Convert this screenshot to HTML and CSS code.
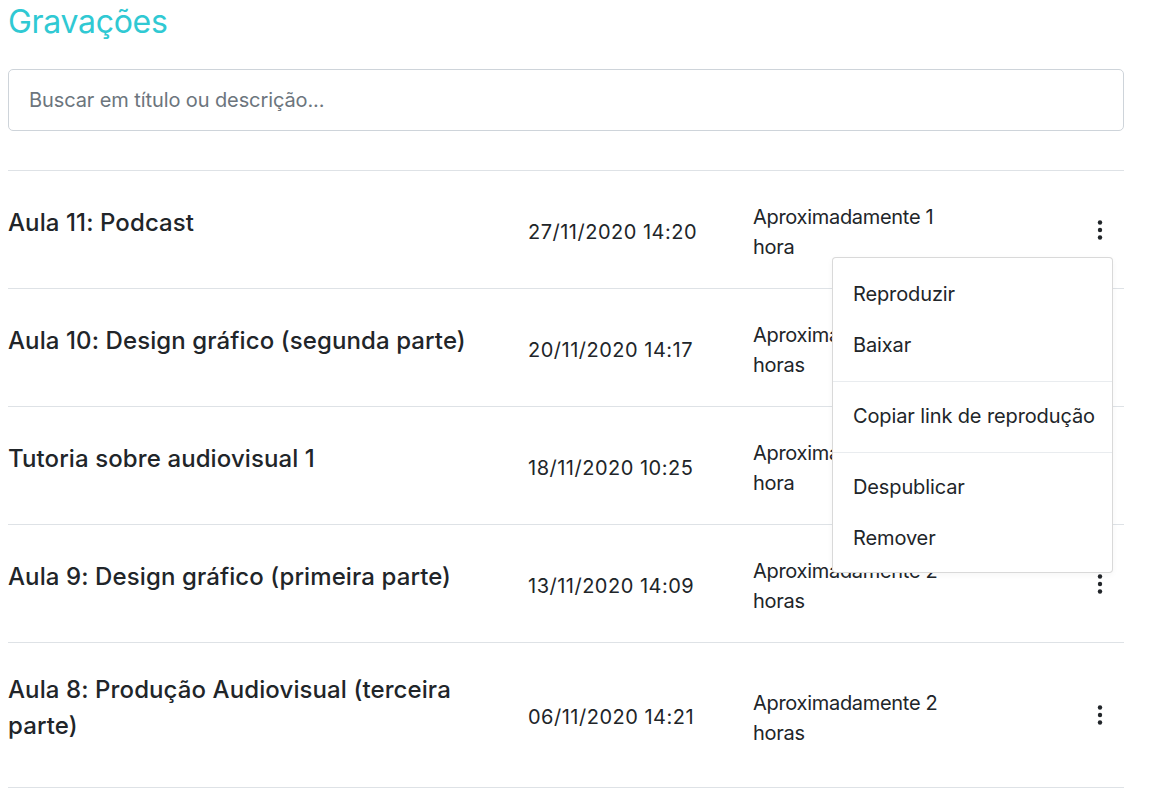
FILE: index.html
```html
<!DOCTYPE html>
<html lang="pt-BR">
<head>
<meta charset="utf-8">
<title>Gravações</title>
<link rel="stylesheet" href="styles.css">
</head>
<body>
<main class="page">
  <h1 class="page-title">Gravações</h1>
  <input class="search" type="text" placeholder="Buscar em título ou descrição...">
  <ul class="rec-list">
    <li class="rec-row">
      <h5 class="rec-title">Aula 11: Podcast</h5>
      <div class="rec-date">27/11/2020 14:20</div>
      <div class="rec-dur">Aproximadamente 1 hora</div>
      <div class="rec-actions">
        <button class="kebab" aria-label="Opções">
          <svg width="6" height="20" viewBox="0 0 6 20"><circle cx="3" cy="2.5" r="2.2"/><circle cx="3" cy="10" r="2.2"/><circle cx="3" cy="17.5" r="2.2"/></svg>
        </button>
      </div>
      <div class="menu">
        <a class="menu-item">Reproduzir</a>
        <a class="menu-item">Baixar</a>
        <div class="menu-divider"></div>
        <a class="menu-item">Copiar link de reprodução</a>
        <div class="menu-divider"></div>
        <a class="menu-item">Despublicar</a>
        <a class="menu-item">Remover</a>
      </div>
    </li>
    <li class="rec-row">
      <h5 class="rec-title">Aula 10: Design gráfico (segunda parte)</h5>
      <div class="rec-date">20/11/2020 14:17</div>
      <div class="rec-dur">Aproximadamente 2 horas</div>
      <div class="rec-actions">
        <button class="kebab" aria-label="Opções">
          <svg width="6" height="20" viewBox="0 0 6 20"><circle cx="3" cy="2.5" r="2.2"/><circle cx="3" cy="10" r="2.2"/><circle cx="3" cy="17.5" r="2.2"/></svg>
        </button>
      </div>
    </li>
    <li class="rec-row">
      <h5 class="rec-title">Tutoria sobre audiovisual 1</h5>
      <div class="rec-date">18/11/2020 10:25</div>
      <div class="rec-dur">Aproximadamente 1 hora</div>
      <div class="rec-actions">
        <button class="kebab" aria-label="Opções">
          <svg width="6" height="20" viewBox="0 0 6 20"><circle cx="3" cy="2.5" r="2.2"/><circle cx="3" cy="10" r="2.2"/><circle cx="3" cy="17.5" r="2.2"/></svg>
        </button>
      </div>
    </li>
    <li class="rec-row">
      <h5 class="rec-title">Aula 9: Design gráfico (primeira parte)</h5>
      <div class="rec-date">13/11/2020 14:09</div>
      <div class="rec-dur">Aproximadamente 2 horas</div>
      <div class="rec-actions">
        <button class="kebab" aria-label="Opções">
          <svg width="6" height="20" viewBox="0 0 6 20"><circle cx="3" cy="2.5" r="2.2"/><circle cx="3" cy="10" r="2.2"/><circle cx="3" cy="17.5" r="2.2"/></svg>
        </button>
      </div>
    </li>
    <li class="rec-row">
      <h5 class="rec-title">Aula 8: Produção Audiovisual (terceira parte)</h5>
      <div class="rec-date">06/11/2020 14:21</div>
      <div class="rec-dur">Aproximadamente 2 horas</div>
      <div class="rec-actions">
        <button class="kebab" aria-label="Opções">
          <svg width="6" height="20" viewBox="0 0 6 20"><circle cx="3" cy="2.5" r="2.2"/><circle cx="3" cy="10" r="2.2"/><circle cx="3" cy="17.5" r="2.2"/></svg>
        </button>
      </div>
    </li>
  </ul>
</main>
</body>
</html>
```

FILE: styles.css
```css
* { box-sizing: border-box; }

html, body {
  margin: 0;
  padding: 0;
  background: #fff;
}

body {
  font-family: Inter, "Open Sans", "Liberation Sans", sans-serif;
  color: #212529;
}

.page {
  width: 1116px;
  margin-left: 8px;
}

.page-title {
  margin: 0;
  font-size: 32px;
  font-weight: 400;
  line-height: 44px;
  letter-spacing: -0.3px;
  color: #30c9d3;
}

.search {
  display: block;
  width: 100%;
  height: 62px;
  margin-top: 25px;
  padding: 0 20px;
  border: 1px solid #ced4da;
  border-radius: 5px;
  font-family: inherit;
  font-size: 20px;
  letter-spacing: -0.1px;
  color: #495057;
  outline: none;
}

.search::placeholder {
  color: #6c757d;
}

.rec-list {
  list-style: none;
  margin: 39px 0 0;
  padding: 0;
  border-top: 1px solid #dee2e6;
}

.rec-row {
  position: relative;
  display: grid;
  grid-template-columns: 520px 225px 1fr 48px;
  align-items: center;
  padding: 28px 0;
  border-bottom: 1px solid #dee2e6;
}

.rec-title {
  margin: 1px 0 15px;
  padding-right: 24px;
  font-size: 24px;
  font-weight: 500;
  line-height: 36px;
  letter-spacing: 0.1px;
  color: #212529;
}

.rec-date {
  padding-top: 2px;
  margin-bottom: -2px;
  font-size: 20px;
  line-height: 30px;
  letter-spacing: 0.5px;
  color: #212529;
}

.rec-dur {
  max-width: 200px;
  padding-top: 3px;
  margin-bottom: -2px;
  font-size: 20px;
  line-height: 30px;
  letter-spacing: -0.3px;
  color: #212529;
}

.rec-actions {
  display: flex;
  justify-content: center;
}

.kebab {
  display: flex;
  align-items: center;
  justify-content: center;
  width: 32px;
  height: 32px;
  padding: 0;
  border: 0;
  background: transparent;
  cursor: pointer;
}

.kebab svg { fill: #212529; }

.menu {
  position: absolute;
  top: 86px;
  right: 11px;
  z-index: 10;
  width: 281px;
  padding: 11px 0 8px;
  background: #fff;
  border: 1px solid rgba(0, 0, 0, 0.15);
  border-radius: 4px;
  box-shadow: 0 2px 6px rgba(0, 0, 0, 0.04);
}

.menu-item {
  display: block;
  height: 51px;
  padding: 0 20px;
  font-size: 20px;
  line-height: 51px;
  letter-spacing: -0.12px;
  color: #212529;
  white-space: nowrap;
  cursor: pointer;
}

.menu-divider {
  height: 1px;
  margin: 9.5px 0;
  background: #e9ecef;
}
```
